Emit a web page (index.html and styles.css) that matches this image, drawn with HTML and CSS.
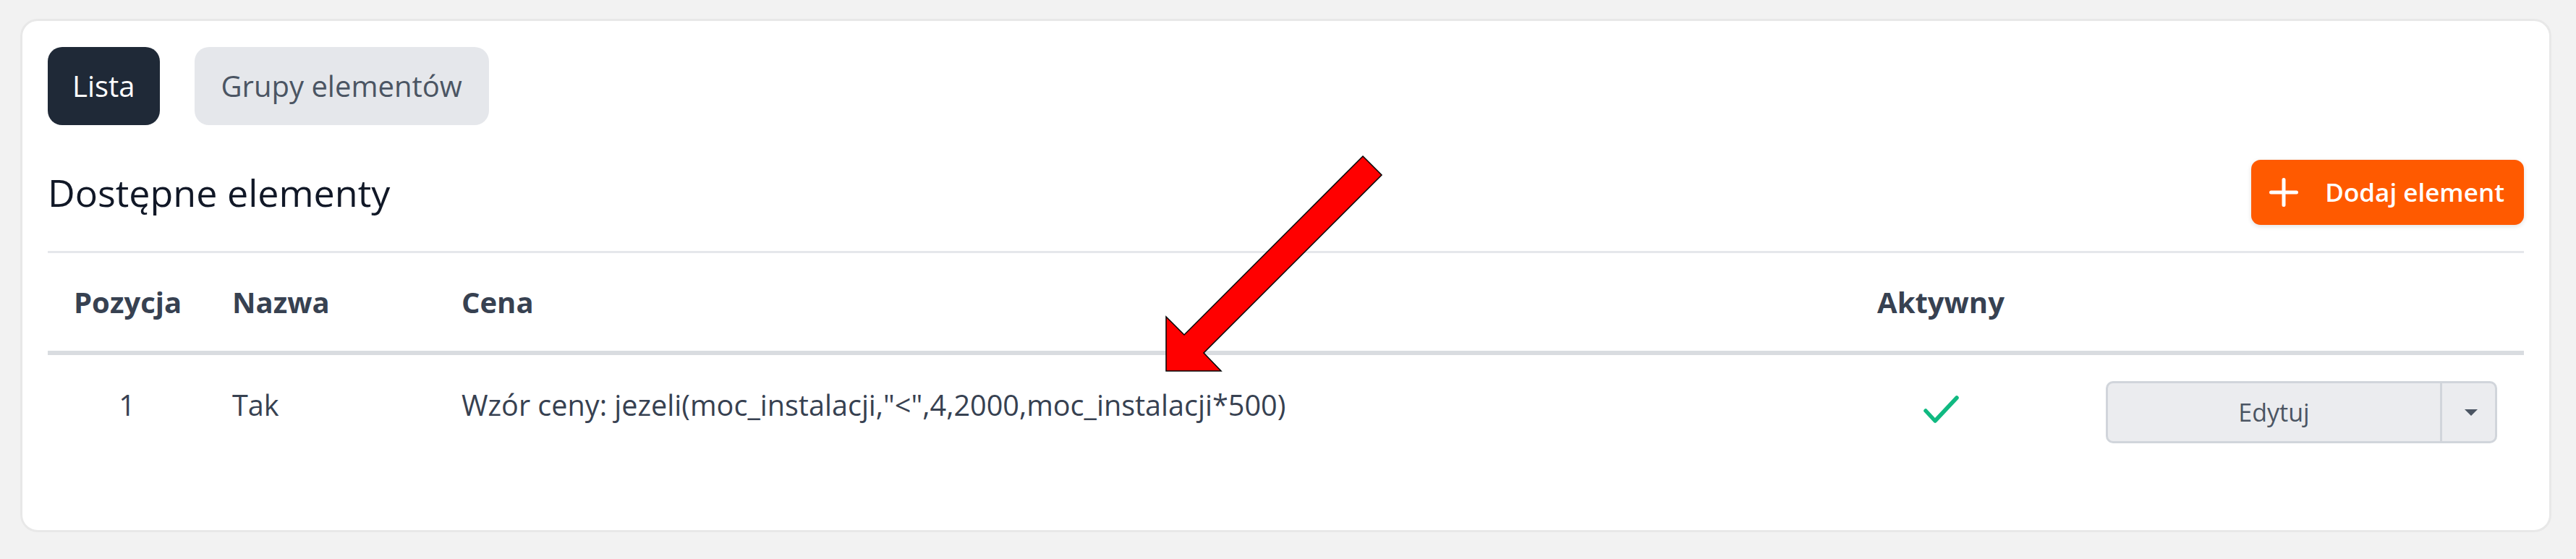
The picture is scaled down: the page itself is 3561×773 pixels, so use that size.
FILE: index.html
```html
<!DOCTYPE html>
<html lang="pl">
<head>
<meta charset="utf-8">
<title>Dostępne elementy</title>
<link rel="stylesheet" href="styles.css">
</head>
<body>
<div class="card">
  <div class="tabs">
    <button class="tab tab-active">Lista</button>
    <button class="tab">Grupy elementów</button>
  </div>
  <div class="head-row">
    <h2 class="title">Dostępne elementy</h2>
    <button class="add-btn">
      <svg class="plus" width="40" height="40" viewBox="0 0 40 40"><path d="M20 2.5V37.5M2.5 20H37.5" stroke="#fff" stroke-width="5" stroke-linecap="round" fill="none"/></svg>
      <span>Dodaj element</span>
    </button>
  </div>
  <table class="tbl">
    <colgroup>
      <col class="c1"><col class="c2"><col class="c3"><col class="c4"><col class="c5">
    </colgroup>
    <thead>
      <tr>
        <th class="center">Pozycja</th>
        <th>Nazwa</th>
        <th>Cena</th>
        <th class="center">Aktywny</th>
        <th></th>
      </tr>
    </thead>
    <tbody>
      <tr>
        <td class="center">1</td>
        <td>Tak</td>
        <td>Wzór ceny: jezeli(moc_instalacji,"&lt;",4,2000,moc_instalacji*500)</td>
        <td class="center"><svg class="check" width="54" height="44" viewBox="0 0 54 44"><path d="M6 23L19 37L49 5" stroke="#10b981" stroke-width="5.5" stroke-linecap="round" stroke-linejoin="round" fill="none"/></svg></td>
        <td>
          <div class="split">
            <button class="split-main">Edytuj</button>
            <button class="split-caret"><span class="tri"></span></button>
          </div>
        </td>
      </tr>
    </tbody>
  </table>
</div>
<svg class="arrow" width="3561" height="773" viewBox="0 0 3561 773"><polygon points="1884,216 1910,242 1664,488 1688,513 1612,513 1612,438 1637,463" fill="#ff0000" stroke="#000" stroke-width="1.5" stroke-linejoin="miter"/></svg>
</body>
</html>
```
FILE: styles.css
```css
* { box-sizing: border-box; }
html, body { margin: 0; height: 100%; }
body {
  background: #f2f2f2;
  padding: 26px 34px 0 28px;
  font-family: "Open Sans", "Noto Sans", sans-serif;
  color: #374151;
  position: relative;
  overflow: hidden;
}
.card {
  background: #fff;
  border: 3px solid #e8e8e8;
  border-radius: 24px;
  padding: 36px 35px 84px 35px;
}
.tabs {
  display: flex;
  gap: 48px;
}
.tab {
  font-family: inherit;
  font-size: 40px;
  font-weight: 500;
  line-height: 60px;
  padding: 24px 34px;
  border: 0;
  border-radius: 20px;
  background: #e5e7eb;
  color: #4b5563;
}
.tab-active {
  background: #1f2937;
  color: #fff;
}
.tab + .tab { padding: 24px 37px; }
.head-row {
  margin-top: 48px;
  display: flex;
  justify-content: space-between;
  align-items: center;
  padding-bottom: 36px;
  border-bottom: 3px solid #e5e7eb;
}
.title {
  margin: 0;
  font-size: 52px;
  font-weight: 500;
  line-height: 1.2;
  color: #111827;
}
.add-btn {
  display: flex;
  align-items: center;
  gap: 37px;
  height: 90px;
  padding: 0 27px 0 25px;
  border: 0;
  border-radius: 13px;
  background: #ff5a00;
  color: #fff;
  font-family: inherit;
  font-size: 35px;
  font-weight: 600;
  line-height: 1.5;
  box-shadow: 0 2px 6px rgba(0,0,0,0.12);
}
.plus { display: block; }
.tbl {
  width: 100%;
  table-layout: fixed;
  border-collapse: separate;
  border-spacing: 0;
}
.c1 { width: 219px; }
.c2 { width: 317px; }
.c3 { width: 1889px; }
.c4 { width: 384px; }
.c5 { width: 614px; }
.tbl th {
  font-size: 40px;
  font-weight: 700;
  line-height: 60px;
  color: #374151;
  text-align: left;
  padding: 38px 36px 37px 36px;
  border-bottom: 6px solid #d9dce0;
  white-space: nowrap;
}
.tbl td {
  font-size: 39.6px;
  font-weight: 400;
  line-height: 66px;
  color: #374151;
  padding: 36px;
  vertical-align: top;
  white-space: nowrap;
}
.tbl .center { text-align: center; }
.check {
  display: block;
  margin: 18px auto 0;
}
.split {
  display: flex;
  width: 541px;
  height: 86px;
  border: 3px solid #d1d5db;
  border-radius: 10px;
  background: #ebecef;
  overflow: hidden;
}
.split-main {
  width: 459px;
  border: 0;
  border-right: 3px solid #d1d5db;
  background: transparent;
  font-family: inherit;
  font-size: 34px;
  line-height: 1.5;
  color: #4b5563;
  padding: 0;
  flex: none;
  box-sizing: content-box;
}
.split-caret {
  flex: 1;
  border: 0;
  background: transparent;
  display: flex;
  align-items: center;
  justify-content: center;
  padding: 0 0 0 6px;
}
.tri {
  width: 0;
  height: 0;
  border-left: 9px solid transparent;
  border-right: 9px solid transparent;
  border-top: 9px solid #4b5563;
}
.arrow {
  position: absolute;
  left: 0;
  top: 0;
  pointer-events: none;
}
```
